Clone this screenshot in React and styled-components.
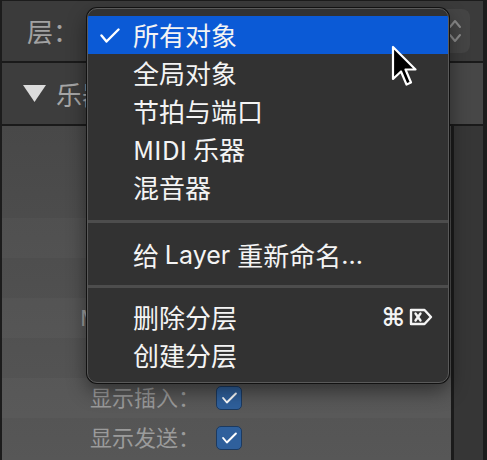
import * as React from "react";
import styled, { createGlobalStyle } from "styled-components";

const GlobalStyle = createGlobalStyle`
  html, body {
    margin: 0;
    padding: 0;
    background: #1e1e1e;
  }
  body {
    font-family: "Noto Sans CJK SC", "Noto Sans", sans-serif;
  }
`;

const Window = styled.div`
  position: relative;
  width: 487px;
  height: 460px;
  box-sizing: border-box;
  overflow: hidden;
  background: #1c1c1c;
  padding: 1px 4px 0 2px;
  display: flex;
  flex-direction: column;
`;

const TopBar = styled.div`
  height: 60px;
  flex: none;
  display: flex;
  align-items: center;
  padding: 0 13px 0 25px;
  background: #3b3b3b;
  border-bottom: 2px solid #1a1a1a;
`;

const BarLabel = styled.span`
  font-size: 26px;
  line-height: 1;
  color: #a2a2a2;
`;

const PopupButton = styled.div`
  flex: 1;
  height: 44px;
  margin-left: 12px;
  border-radius: 8px;
  background: #454545;
  display: flex;
  align-items: center;
  justify-content: flex-end;
  padding-right: 8px;
`;

const Header = styled.div`
  height: 61px;
  flex: none;
  display: grid;
  grid-template-columns: 1fr 34px;
  border-bottom: 2px solid #1a1a1a;
`;

const HeaderMain = styled.div`
  background: #3d3d3d;
  display: flex;
  align-items: center;
  gap: 10px;
  padding-left: 21px;
`;

const HeaderSide = styled.div`
  background: #474747;
`;

const HeaderTitle = styled.span`
  font-size: 26px;
  line-height: 1;
  color: #a6a6a6;
`;

const Body = styled.div`
  flex: 1;
  display: grid;
  grid-template-columns: 449px 3px 1fr;
`;

const Inspector = styled.div`
  background: linear-gradient(#484848, #575757);
  display: flex;
  flex-direction: column;
`;

const Divider = styled.div`
  background: #1b1b1b;
`;

const SideColumn = styled.div`
  background: #363636;
`;

const Row = styled.div`
  height: ${(p) => p.$h || 40}px;
  flex: none;
  display: grid;
  grid-template-columns: 198px auto;
  column-gap: 16px;
  align-items: center;
  justify-content: start;
  background: ${(p) => (p.$alt ? "rgba(255,255,255,0.025)" : "transparent")};
`;

const RowLabel = styled.span`
  text-align: right;
  font-family: Inter, "Noto Sans CJK SC", sans-serif;
  font-size: 22px;
  line-height: 1;
  color: #9b9b9b;
  white-space: nowrap;
`;

const CheckBox = styled.span`
  width: 26px;
  height: 24px;
  box-sizing: border-box;
  border-radius: 5px;
  background: #2f609c;
  border: 1px solid #1c3a60;
  display: flex;
  align-items: center;
  justify-content: center;
`;

const Menu = styled.div`
  position: absolute;
  left: 87px;
  top: 8px;
  width: 362px;
  box-sizing: border-box;
  border: 1px solid #5a5a5a;
  border-radius: 10px;
  background: #323232;
  box-shadow: 0 0 0 1px #121212, 0 8px 20px rgba(0, 0, 0, 0.45);
  padding: 7px 0 8px;
  overflow: hidden;
`;

const Item = styled.div`
  height: 38px;
  display: flex;
  align-items: center;
  padding-right: 15px;
  background: ${(p) => (p.$active ? "#0b5ad6" : "transparent")};
  color: #f4f4f4;
  font-size: 26px;
  line-height: 1;
  white-space: pre;
`;

const Latin = styled.span`
  font-family: Inter, "Noto Sans CJK SC", sans-serif;
  font-size: 25px;
`;

const CheckCell = styled.span`
  width: 45px;
  flex: none;
  display: flex;
  align-items: center;
  padding-left: 12px;
  box-sizing: border-box;
`;

const Separator = styled.div`
  height: ${(p) => p.$h}px;
  display: flex;
  align-items: center;
  &::after {
    content: "";
    flex: 1;
    height: 3px;
    background: #4d4d4d;
  }
`;

const Shortcut = styled.span`
  margin-left: auto;
  display: flex;
  align-items: center;
  gap: 4px;
`;

const CmdGlyph = styled.span`
  font-family: "DejaVu Sans", sans-serif;
  font-weight: bold;
  font-size: 25px;
  line-height: 1;
`;

const Pointer = styled.svg`
  position: absolute;
  left: 391px;
  top: 45px;
`;

const Chevrons = () => (
  <svg width="14" height="26" viewBox="0 0 14 26">
    <polyline points="2,9 7,3 12,9" fill="none" stroke="#8a8a8a" strokeWidth="2" strokeLinecap="round" strokeLinejoin="round" />
    <polyline points="2,17 7,23 12,17" fill="none" stroke="#8a8a8a" strokeWidth="2" strokeLinecap="round" strokeLinejoin="round" />
  </svg>
);

const Tick = ({ w = 20, h = 15, width = 2.4 }) => (
  <svg width={w} height={h} viewBox="0 0 20 15">
    <polyline points="1.5,7.5 6.5,13.5 18.5,1.5" fill="none" stroke="#fff" strokeWidth={width} strokeLinecap="round" strokeLinejoin="round" />
  </svg>
);

const ForwardDelete = () => (
  <svg width="24" height="18" viewBox="0 0 24 18">
    <path d="M2 2 H15.5 L22 9 L15.5 16 H2 Z" fill="none" stroke="#f4f4f4" strokeWidth="2.4" strokeLinejoin="round" />
    <path d="M6.5 5.5 L11.5 12.5 M11.5 5.5 L6.5 12.5" stroke="#f4f4f4" strokeWidth="2.4" strokeLinecap="round" />
  </svg>
);

const menuItems = [
  { label: "所有对象", checked: true },
  { label: "全局对象" },
  { label: "节拍与端口" },
  { label: "MIDI 乐器" },
  { label: "混音器" },
];

const inspectorRows = [
  { h: 92 },
  { h: 40, alt: true },
  { h: 40 },
  { h: 40, alt: true, label: "MIDI 通道：" },
  { h: 40 },
  { h: 40, alt: true, label: "显示插入：", check: true },
  { h: 40, label: "显示发送：", check: true },
];

export default function App() {
  return (
    <Window>
      <GlobalStyle />
      <TopBar>
        <BarLabel>层：</BarLabel>
        <PopupButton>
          <Chevrons />
        </PopupButton>
      </TopBar>
      <Header>
        <HeaderMain>
          <svg width="23" height="17" viewBox="0 0 23 17">
            <polygon points="0,0 23,0 11.5,17" fill="#dcdcdc" />
          </svg>
          <HeaderTitle>乐器</HeaderTitle>
        </HeaderMain>
        <HeaderSide />
      </Header>
      <Body>
        <Inspector>
          {inspectorRows.map((r, i) => (
            <Row key={i} $h={r.h} $alt={r.alt}>
              <RowLabel>{r.label || ""}</RowLabel>
              {r.check ? (
                <CheckBox>
                  <Tick w={15} h={12} width={2.6} />
                </CheckBox>
              ) : null}
            </Row>
          ))}
        </Inspector>
        <Divider />
        <SideColumn />
      </Body>

      <Menu>
        {menuItems.map((m) => (
          <Item key={m.label} $active={m.checked}>
            <CheckCell>{m.checked ? <Tick /> : null}</CheckCell>
            {m.label}
          </Item>
        ))}
        <Separator $h={30} />
        <Item>
          <CheckCell />
          <span>{"给 "}</span>
          <Latin>{"Layer "}</Latin>
          <span>重新命名</span>
          <Latin>...</Latin>
        </Item>
        <Separator $h={24} />
        <Item>
          <CheckCell />
          删除分层
          <Shortcut>
            <CmdGlyph>⌘</CmdGlyph>
            <ForwardDelete />
          </Shortcut>
        </Item>
        <Item>
          <CheckCell />
          创建分层
        </Item>
      </Menu>

      <Pointer width="30" height="46" viewBox="0 0 30 46">
        <path
          d="M2 2 L2 34 L10 26.5 L15.5 39.5 L20 37.5 L14.5 24.5 L24.5 24.5 Z"
          fill="#000"
          stroke="#fff"
          strokeWidth="2.2"
          strokeLinejoin="round"
        />
      </Pointer>
    </Window>
  );
}
